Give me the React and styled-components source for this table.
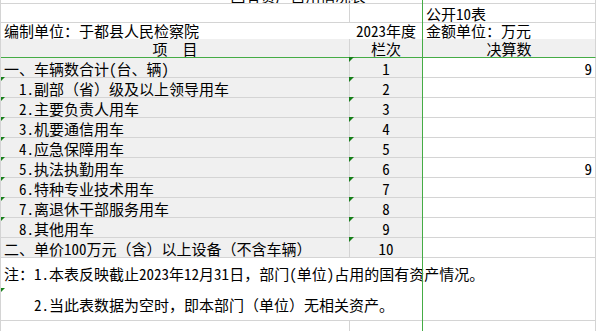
import React from "react";
import styled, { createGlobalStyle, css } from "styled-components";

const LINE = "#d4d4d4";
const FREEZE = "#45ac45";
const SHADE = "#f0f0f0";
const MARK = "#17801a";

const GlobalStyle = createGlobalStyle`
  html, body {
    margin: 0;
    padding: 0;
    background: #fff;
    overflow: hidden;
  }
`;

const Sheet = styled.div`
  position: relative;
  width: 596px;
  height: 331px;
  overflow: hidden;
  box-sizing: border-box;
  border-left: 1px solid ${LINE};
  font-family: "Noto Sans CJK SC", "Noto Sans", sans-serif;
  font-size: 15px;
  color: #000;
`;

const Row = styled.div`
  display: grid;
  grid-template-columns: 349px 73px 173px;
  height: ${(p) => p.$h}px;
`;

const justify = { left: "flex-start", center: "center", right: "flex-end" };

const borderFor = (kind) => {
  if (kind === "none") return "none";
  if (kind === "freeze") return `1px solid ${FREEZE}`;
  return `1px solid ${LINE}`;
};

const Cell = styled.div`
  position: relative;
  box-sizing: border-box;
  display: flex;
  align-items: ${(p) => (p.$middle ? "center" : "flex-end")};
  justify-content: ${(p) => justify[p.$align || "left"]};
  grid-column: span ${(p) => p.$span || 1};
  padding: 0 3px ${(p) => (p.$middle ? 0 : 1)}px ${(p) => 3 + (p.$indent || 0) * 15}px;
  background: ${(p) => (p.$shade ? SHADE : "transparent")};
  border-right: ${(p) => borderFor(p.$right)};
  border-bottom: ${(p) => borderFor(p.$bottom)};
  line-height: 15px;
  white-space: nowrap;
  ${(p) =>
    p.$mark &&
    css`
      &::before {
        content: "";
        position: absolute;
        top: -1px;
        left: -1px;
        border-top: 5px solid ${MARK};
        border-right: 5px solid transparent;
        z-index: 1;
      }
    `}
`;

const TitleCell = styled(Cell)`
  overflow: hidden;
  padding: 0;
`;

// ascii runs use the half-width glyphs, like the sheet's 宋体
const Half = styled.span`
  font-feature-settings: "hwid";
`;

const Txt = ({ children }) => {
  if (typeof children !== "string") return children ?? null;
  return children
    .split(/([\x20-\x7e]+)/)
    .filter(Boolean)
    .map((part, i) =>
      /^[\x20-\x7e]+$/.test(part) ? <Half key={i}>{part}</Half> : <span key={i}>{part}</span>
    );
};

// frozen-pane divider drawn over the sheet, as the spreadsheet does
const FreezeColumn = styled.div`
  position: absolute;
  top: 0;
  bottom: 0;
  left: 421px;
  width: 1px;
  background: ${FREEZE};
  z-index: 2;
`;

const items = [
  { name: "一、车辆数合计(台、辆)", no: "1", value: "9" },
  { name: "1.副部（省）级及以上领导用车", no: "2", sub: true },
  { name: "2.主要负责人用车", no: "3", sub: true },
  { name: "3.机要通信用车", no: "4", sub: true },
  { name: "4.应急保障用车", no: "5", sub: true },
  { name: "5.执法执勤用车", no: "6", sub: true, value: "9" },
  { name: "6.特种专业技术用车", no: "7", sub: true },
  { name: "7.离退休干部服务用车", no: "8", sub: true },
  { name: "8.其他用车", no: "9", sub: true },
  { name: "二、单价100万元（含）以上设备（不含车辆）", no: "10" },
];

export default function App() {
  return (
    <>
      <GlobalStyle />
      <Sheet>
        <Row $h={4}>
          <TitleCell $span={3} $align="center">
            国有资产占用情况表
          </TitleCell>
        </Row>

        <Row $h={19}>
          <Cell />
          <Cell />
          <Cell>
            <Txt>公开10表</Txt>
          </Cell>
        </Row>

        <Row $h={16}>
          <Cell $right="none" $bottom="none">
            编制单位：于都县人民检察院
          </Cell>
          <Cell $align="center" $bottom="none">
            <Txt>2023年度</Txt>
          </Cell>
          <Cell $bottom="none">金额单位：万元</Cell>
        </Row>

        <Row $h={19}>
          <Cell $shade $align="center" $bottom="freeze">
            项　目
          </Cell>
          <Cell $shade $align="center" $bottom="freeze">
            栏次
          </Cell>
          <Cell $shade $align="center" $bottom="freeze">
            决算数
          </Cell>
        </Row>

        {items.map((it) => (
          <Row $h={20} key={it.no}>
            <Cell $shade $indent={it.sub ? 1 : 0} $mark={it.sub}>
              <Txt>{it.name}</Txt>
            </Cell>
            <Cell $shade $align="center" $mark>
              <Txt>{it.no}</Txt>
            </Cell>
            <Cell $align="right">
              <Txt>{it.value}</Txt>
            </Cell>
          </Row>
        ))}

        <Row $h={31}>
          <Cell $span={3} $middle $bottom="none">
            <Txt>注：1.本表反映截止2023年12月31日，部门(单位)占用的国有资产情况。</Txt>
          </Cell>
        </Row>
        <Row $h={32}>
          <Cell $span={3} $middle $indent={2} $mark>
            <Txt>2.当此表数据为空时，即本部门（单位）无相关资产。</Txt>
          </Cell>
        </Row>

        <Row $h={20}>
          <Cell />
          <Cell />
          <Cell />
        </Row>

        <FreezeColumn />
      </Sheet>
    </>
  );
}
